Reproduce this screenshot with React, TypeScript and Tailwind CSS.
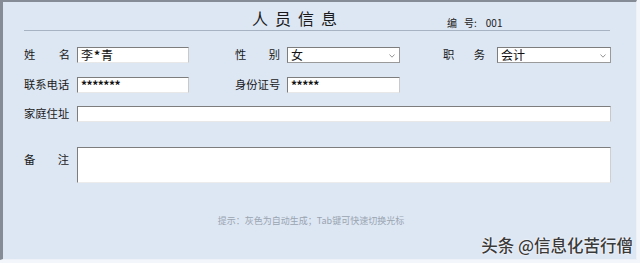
const font = { fontFamily: '"Noto Sans CJK SC", "Noto Sans", sans-serif' };

function Field({ width, children }: { width: string; children?: React.ReactNode }) {
  return (
    <div
      className={`flex h-[16px] items-center border border-t-[#7d7d7d] border-l-[#7d7d7d] border-r-[#c9c9c9] border-b-[#e8e8e8] bg-white pl-[3px] text-[12px] leading-none text-[#111] ${width}`}
    >
      {children}
    </div>
  );
}

function Select({ width, value }: { width: string; value: string }) {
  return (
    <div
      className={`flex h-[16px] items-center justify-between border border-t-[#7d7d7d] border-l-[#7d7d7d] border-r-[#9a9a9a] border-b-[#9a9a9a] bg-white pr-[4px] pl-[3px] text-[12px] leading-none text-[#111] ${width}`}
    >
      <span>{value}</span>
      <svg width="6" height="4" viewBox="0 0 6 4" className="mt-[1px]">
        <polyline points="0.5,0.5 3,3.2 5.5,0.5" fill="none" stroke="#8a8a8a" strokeWidth="0.9" />
      </svg>
    </div>
  );
}

function Label({ children, width = "w-[46px]" }: { children: React.ReactNode; width?: string }) {
  return (
    <div
      className={`flex h-[14px] shrink-0 items-center justify-between whitespace-nowrap text-[11.3px] leading-none text-[#1a1a1a] ${width}`}
    >
      {children}
    </div>
  );
}

export default function App() {
  return (
    <div className="h-[263px] w-[640px] bg-[#f3f6fb]" style={font}>
      <div className="relative h-[260px] w-[637px] border-t-[2px] border-r border-b border-l-[3px] border-t-[#868c96] border-l-[#868c96] border-r-[#eef2f8] border-b-[#eef2f8] bg-[#dde7f4] pl-[21px]">
        {/* 标题 */}
        <div className="flex h-[29px] w-[586px] items-end border-b border-[#a7b2c2]">
          <div className="mb-[4px] ml-[228px] text-[16px] leading-none tracking-[7px] text-[#1a1a1a]">
            人员信息
          </div>
          <div className="mb-[2px] ml-[103px] flex text-[10px] leading-none text-[#222]">
            <span>编</span>
            <span className="ml-[7px]">号:</span>
            <span className="ml-[9px]">001</span>
          </div>
        </div>

        <div className="mt-[16px] flex items-center">
          <Label>
            <span>姓</span>
            <span>名</span>
          </Label>
          <div className="ml-[7px]">
            <Field width="w-[112px]">
              李<span className="mx-[1px] font-bold">*</span>青
            </Field>
          </div>
          <div className="ml-[46px]">
            <Label width="w-[45px]">
              <span>性</span>
              <span>别</span>
            </Label>
          </div>
          <div className="ml-[7px]">
            <Select width="w-[113px]" value="女" />
          </div>
          <div className="ml-[43px]">
            <Label width="w-[42px]">
              <span>职</span>
              <span>务</span>
            </Label>
          </div>
          <div className="ml-[12px]">
            <Select width="w-[114px]" value="会计" />
          </div>
        </div>

        <div className="mt-[14px] flex items-center">
          <Label>联系电话</Label>
          <div className="ml-[7px]">
            <Field width="w-[112px]">
              <span className="font-bold tracking-[-0.5px]">*******</span>
            </Field>
          </div>
          <div className="ml-[46px]">
            <Label width="w-[45px]">身份证号</Label>
          </div>
          <div className="ml-[7px]">
            <Field width="w-[113px]">
              <span className="font-bold tracking-[-0.5px]">*****</span>
            </Field>
          </div>
        </div>

        <div className="mt-[13px] flex items-center">
          <Label>家庭住址</Label>
          <div className="ml-[7px]">
            <Field width="w-[534px]" />
          </div>
        </div>

        <div className="mt-[25px] flex items-start">
          <div className="mt-[6px]">
            <Label>
              <span>备</span>
              <span className="mr-[1px]">注</span>
            </Label>
          </div>
          <div className="ml-[7px] h-[36px] w-[534px] border border-t-[#7d7d7d] border-l-[#7d7d7d] border-r-[#d0d0d0] border-b-[#ececec] bg-white" />
        </div>

        <div className="mt-[32px] w-[586px] pr-[12px] text-center text-[9px] leading-[12px] text-[#9aa4b0]">
          提示：灰色为自动生成；Tab键可快速切换光标
        </div>

        {/* 水印 */}
        <div
          className="absolute right-[3px] bottom-[6px] text-[16.5px] leading-none font-medium text-[#3a3a3a]"
          style={{ textShadow: "0 0 2px #ffffff, 0 0 1px #ffffff" }}
        >
          头条 @信息化苦行僧
        </div>
      </div>
    </div>
  );
}
